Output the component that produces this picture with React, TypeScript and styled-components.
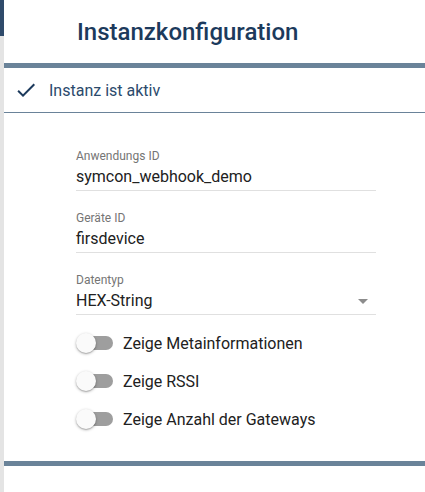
import React from "react";
import styled, { createGlobalStyle } from "styled-components";

const Global = createGlobalStyle`
  html, body { margin: 0; padding: 0; background: #fff; }
  body { font-family: Roboto, "Noto Sans", sans-serif; }
`;

const Page = styled.div`
  display: flex;
  width: 425px;
  height: 492px;
  overflow: hidden;
`;

const SideStrip = styled.div`
  width: 4px;
  flex-shrink: 0;
  background: linear-gradient(to bottom, #2f4b6b 0, #2f4b6b 36px, #e4e4e4 36px);
`;

const Main = styled.div`
  flex: 1;
  display: flex;
  flex-direction: column;
`;

const Header = styled.div`
  height: 63px;
  display: flex;
  align-items: center;
  padding-left: 73px;
`;

const Title = styled.h1`
  margin: 0;
  font-size: 24px;
  font-weight: 500;
  color: #1c3a5c;
  line-height: 28px;
`;

const Bar = styled.div`
  height: 5px;
  background: #6a8399;
`;

const ActiveRow = styled.div`
  height: 44px;
  display: flex;
  align-items: center;
  padding-left: 10px;
  gap: 11px;
  border-bottom: 1px solid #6a8399;
  color: #2b4a6c;
  font-size: 16px;
`;

const Form = styled.div`
  padding: 36px 0 23px 72px;
  display: flex;
  flex-direction: column;
`;

const Field = styled.div`
  width: 300px;
  display: flex;
  flex-direction: column;
  border-bottom: 1px solid #e0e0e0;
  padding-bottom: 3px;
  margin-bottom: 20px;
  &:last-of-type { margin-bottom: 9px; }
`;

const Label = styled.div`
  font-size: 12px;
  line-height: 14px;
  color: #757575;
  margin-bottom: 4px;
`;

const ValueRow = styled.div`
  display: flex;
  align-items: center;
  justify-content: space-between;
  font-size: 16px;
  line-height: 20px;
  color: #212121;
`;

const Arrow = styled.span`
  width: 0;
  height: 0;
  margin-right: 8px;
  border-left: 5px solid transparent;
  border-right: 5px solid transparent;
  border-top: 5px solid #8c8c8c;
`;

const ToggleRow = styled.label`
  height: 38px;
  display: flex;
  align-items: center;
  gap: 10px;
  font-size: 16px;
  color: #212121;
`;

const Switch = styled.span`
  position: relative;
  width: 37px;
  height: 20px;
  flex-shrink: 0;
`;

const Track = styled.span`
  position: absolute;
  left: 3px;
  top: 3px;
  width: 34px;
  height: 14px;
  border-radius: 7px;
  background: #9e9e9e;
`;

const Thumb = styled.span`
  position: absolute;
  left: 0;
  top: 0;
  width: 20px;
  height: 20px;
  border-radius: 50%;
  background: #fafafa;
  box-shadow: 0 1px 3px rgba(0, 0, 0, 0.3), 0 1px 1px rgba(0, 0, 0, 0.14);
`;

const Toggle = ({ label }: { label: string }) => (
  <ToggleRow>
    <Switch>
      <Track />
      <Thumb />
    </Switch>
    {label}
  </ToggleRow>
);

export default function App() {
  return (
    <>
      <Global />
      <Page>
        <SideStrip />
        <Main>
          <Header>
            <Title>Instanzkonfiguration</Title>
          </Header>
          <Bar />
          <ActiveRow>
            <svg width="24" height="24" viewBox="0 0 24 24">
              <path d="M9 16.17L4.83 12l-1.42 1.41L9 19 21 7l-1.41-1.41z" fill="#1c3a5c" />
            </svg>
            Instanz ist aktiv
          </ActiveRow>
          <Form>
            <Field>
              <Label>Anwendungs ID</Label>
              <ValueRow>symcon_webhook_demo</ValueRow>
            </Field>
            <Field>
              <Label>Geräte ID</Label>
              <ValueRow>firsdevice</ValueRow>
            </Field>
            <Field>
              <Label>Datentyp</Label>
              <ValueRow>
                HEX-String
                <Arrow />
              </ValueRow>
            </Field>
            <Toggle label="Zeige Metainformationen" />
            <Toggle label="Zeige RSSI" />
            <Toggle label="Zeige Anzahl der Gateways" />
          </Form>
          <Bar />
        </Main>
      </Page>
    </>
  );
}
